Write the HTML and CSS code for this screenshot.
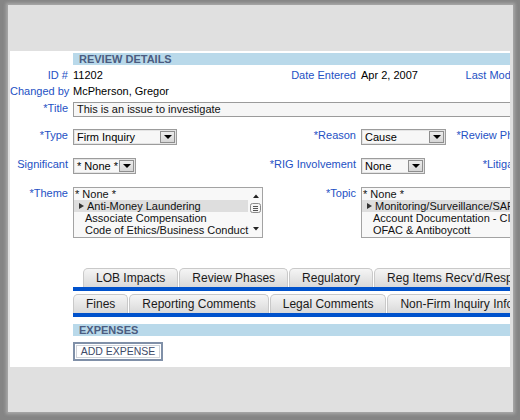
FILE: index.html
```html
<!DOCTYPE html>
<html>
<head>
<meta charset="utf-8">
<link rel="stylesheet" href="styles.css">
</head>
<body>
<div class="window">
  <div class="panel">
    <div class="bar">REVIEW DETAILS</div>

    <div class="row info r-id">
      <span class="lbl">ID #</span><span class="val">11202</span>
      <span class="lbl">Date Entered</span><span class="val">Apr 2, 2007</span>
      <span class="lbl">Last Modified</span><span class="val">Apr 2, 2007</span>
    </div>
    <div class="row info">
      <span class="lbl">Changed by</span><span class="val">McPherson, Gregor</span>
    </div>

    <div class="row r-title">
      <span class="lbl">*Title</span>
      <div class="input span-rest">This is an issue to investigate</div>
    </div>

    <div class="row r-type">
      <span class="lbl">*Type</span>
      <div class="cell"><div class="select w-type"><span class="txt">Firm Inquiry</span><span class="btn"><i class="tri"></i></span></div></div>
      <span class="lbl">*Reason</span>
      <div class="cell"><div class="select w-reason"><span class="txt">Cause</span><span class="btn"><i class="tri"></i></span></div></div>
      <span class="lbl">*Review Phase</span>
    </div>

    <div class="row r-sig">
      <span class="lbl">Significant</span>
      <div class="cell"><div class="select w-sig"><span class="txt">* None *</span><span class="btn"><i class="tri"></i></span></div></div>
      <span class="lbl">*RIG Involvement</span>
      <div class="cell"><div class="select w-rig"><span class="txt">None</span><span class="btn"><i class="tri"></i></span></div></div>
      <span class="lbl">*Litigation</span>
    </div>

    <div class="row r-theme">
      <span class="lbl">*Theme</span>
      <div class="cell">
        <div class="listbox w-theme">
          <div class="items">
            <div class="item none">* None *</div>
            <div class="item sel"><i class="mark"></i>Anti-Money Laundering</div>
            <div class="item">Associate Compensation</div>
            <div class="item">Code of Ethics/Business Conduct</div>
          </div>
          <div class="scroll">
            <svg width="16" height="49" viewBox="0 0 16 49">
              <path d="M5 10 L8 6.5 L11 10 Z" fill="#222"/>
              <rect x="2.5" y="15.5" width="10" height="9" rx="2" fill="#f4f4f4" stroke="#8a8a8a"/>
              <path d="M5 18.5 H10 M5 20.5 H10 M5 22.5 H10" stroke="#555" stroke-width="1"/>
              <path d="M5 39 L8 42.5 L11 39 Z" fill="#222"/>
            </svg>
          </div>
        </div>
      </div>
      <span class="lbl">*Topic</span>
      <div class="cell span-rest">
        <div class="listbox w-topic">
          <div class="items">
            <div class="item none">* None *</div>
            <div class="item sel"><i class="mark"></i>Monitoring/Surveillance/SAR</div>
            <div class="item">Account Documentation - CIP</div>
            <div class="item">OFAC &amp; Antiboycott</div>
          </div>
        </div>
      </div>
    </div>

    <div class="tabs tabs-1">
      <div class="tabrow">
        <span class="tab">LOB Impacts</span>
        <span class="tab">Review Phases</span>
        <span class="tab">Regulatory</span>
        <span class="tab">Reg Items Recv'd/Responses</span>
      </div>
      <div class="tabline"></div>
    </div>
    <div class="tabs tabs-2">
      <div class="tabrow">
        <span class="tab">Fines</span>
        <span class="tab">Reporting Comments</span>
        <span class="tab">Legal Comments</span>
        <span class="tab">Non-Firm Inquiry Info</span>
      </div>
      <div class="tabline"></div>
    </div>

    <div class="bar bar-exp">EXPENSES</div>
    <div class="actions">
      <span class="button">ADD EXPENSE</span>
    </div>
  </div>
</div>
</body>
</html>
```

FILE: styles.css
```css
* { box-sizing: border-box; }
html, body { margin: 0; padding: 0; }
body {
  background: #858585;
  width: 520px;
  height: 420px;
  overflow: hidden;
  font-family: "Liberation Sans", Arial, sans-serif;
  font-size: 11px;
  color: #000;
}
.window {
  margin: 5px 0 0 8px;
  width: 505px;
  height: 407px;
  background: #e0e0e0;
  box-shadow: 0 0 3px 2px #a9a9a9;
  padding: 46px 0 0 2px;
}
.panel {
  width: 500px;
  height: 316px;
  background: #fff;
  overflow: hidden;
  padding-top: 2px;
}
.bar {
  margin-left: 63px;
  width: 700px;
  height: 12px;
  background: #b9d9ea;
  color: #4b5c80;
  font-weight: bold;
  font-size: 11px;
  line-height: 12px;
  padding-left: 6px;
}
.row {
  display: grid;
  grid-template-columns: 63px 190px 98px 90px 85px 220px;
  width: 746px;
  align-items: start;
}
.lbl {
  text-align: right;
  padding-right: 5px;
  color: #2451c4;
  white-space: nowrap;
  line-height: 13px;
}
.val { white-space: nowrap; }
.info { line-height: 16px; }
.info .lbl { line-height: 16px; }
.r-id { margin-top: 2px; }
.r-title { margin-top: 3px; }
.r-type { margin-top: 12px; }
.r-sig { margin-top: 13px; }
.r-theme { margin-top: 13px; }
.span-rest { grid-column: 2 / -1; }
.r-theme .span-rest { grid-column: 4 / -1; }

.input {
  width: 600px;
  height: 15px;
  border: 1px solid #9b9b9b;
  background: #f6f6f6;
  padding-left: 3px;
  line-height: 13px;
  color: #111;
  white-space: nowrap;
}

.select {
  display: flex;
  align-items: center;
  height: 16px;
  border: 1px solid #9c9c9c;
  box-shadow: inset 0 0 0 1px #e4e4e4;
  background: #f7f7f7;
}
.select .txt {
  flex: 1;
  padding-left: 3px;
  line-height: 14px;
  white-space: nowrap;
  overflow: hidden;
}
.select .btn {
  flex: none;
  width: 15px;
  height: 12px;
  margin-right: 1px;
  border: 1px solid #8e8e8e;
  background: linear-gradient(#ececec, #d6d6d6);
  display: flex;
  align-items: center;
  justify-content: center;
}
.tri {
  display: block;
  width: 0;
  height: 0;
  border-left: 4px solid transparent;
  border-right: 4px solid transparent;
  border-top: 4px solid #000;
}
.w-type { width: 104px; }
.w-reason { width: 85px; }
.w-sig { width: 63px; }
.w-rig { width: 64px; }

.listbox {
  display: flex;
  height: 51px;
  border: 1px solid #a3a3a3;
  background: #f8f8f8;
  overflow: hidden;
}
.w-theme { width: 190px; }
.w-topic { width: 220px; }
.items { flex: 1; }
.item {
  height: 12px;
  line-height: 12px;
  padding-left: 11px;
  white-space: nowrap;
  color: #111;
}
.item.none { padding-left: 1px; }
.item.sel {
  background: #dedede;
  padding-left: 5px;
  display: flex;
  align-items: center;
}
.mark {
  display: block;
  width: 0;
  height: 0;
  border-top: 3px solid transparent;
  border-bottom: 3px solid transparent;
  border-left: 5px solid #333;
  margin-right: 3px;
}
.scroll { width: 16px; }
.scroll svg { display: block; }

.tabs-1 { margin-top: 30px; }
.tabs-2 { margin-top: 3px; }
.tabrow {
  display: flex;
  gap: 1px;
  height: 19px;
  padding-left: 63px;
  white-space: nowrap;
}
.tabs-1 .tabrow { padding-left: 73px; }
.tab {
  flex: none;
  height: 19px;
  padding: 0 12px;
  border: 1px solid #c9c9c9;
  border-bottom: none;
  border-radius: 5px 5px 0 0;
  background: linear-gradient(#f5f5f5, #d9d9d9);
  font-size: 12px;
  line-height: 18px;
  color: #1a1a1a;
}
.tabline {
  margin-left: 63px;
  height: 4px;
  background: #0052cc;
}

.bar-exp { margin-top: 7px; }
.actions {
  margin-top: 6px;
  padding-left: 63px;
}
.button {
  display: inline-block;
  width: 90px;
  height: 19px;
  border: 2px solid #8090a8;
  box-shadow: inset 0 0 0 1px #fff, inset 0 0 0 2px #cfd3da;
  background: #fff;
  font-size: 10.5px;
  line-height: 15px;
  text-align: center;
  color: #3e4a68;
}
```
